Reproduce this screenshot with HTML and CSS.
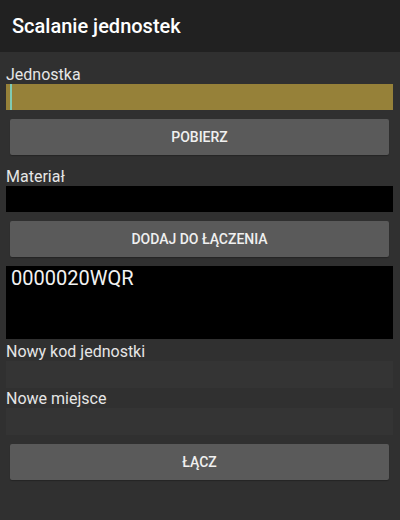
FILE: index.html
```html
<!DOCTYPE html>
<html>
<head>
    <meta charset="UTF-8">
    <link rel="stylesheet" href="styles.css">
</head>
<body>
    <div class="toolbar">Scalanie jednostek</div>
    <div class="content">
        <div class="field-label first">Jednostka</div>
        <div class="field-input focused"><span class="cursor"></span></div>
        <button class="action-btn">POBIERZ</button>

        <div class="field-label after-btn">Materiał</div>
        <div class="field-input black"></div>
        <button class="action-btn">DODAJ DO ŁĄCZENIA</button>

        <div class="unit-list">0000020WQR</div>

        <div class="field-label after-list">Nowy kod jednostki</div>
        <div class="field-input tall"></div>

        <div class="field-label after-input">Nowe miejsce</div>
        <div class="field-input tall"></div>

        <button class="action-btn">ŁĄCZ</button>
    </div>
</body>
</html>
```

FILE: styles.css
```css
html, body {
    margin: 0;
    padding: 0;
    height: 100%;
}
body {
    background: #303030;
    font-family: Roboto, "Noto Sans", sans-serif;
    color: #e6e6e6;
}
.toolbar {
    height: 52px;
    line-height: 52px;
    background: #212121;
    color: #fff;
    font-size: 20px;
    font-weight: 500;
    padding-left: 12px;
}
.content {
    display: flex;
    flex-direction: column;
    padding: 0 7px 0 6px;
}
.field-label {
    font-size: 16px;
    line-height: 19px;
    height: 19px;
    color: #e6e6e6;
}
.field-label.first {
    margin-top: 13px;
}
.field-label.after-btn {
    margin-top: 12px;
}
.field-label.after-list {
    margin-top: 3px;
}
.field-label.after-input {
    margin-top: 1px;
}
.field-input {
    height: 26px;
    background: #343434;
    position: relative;
}
.field-input.tall {
    height: 27px;
}
.field-input.focused {
    background: #968139;
}
.field-input.black {
    background: #000;
}
.cursor {
    position: absolute;
    left: 4px;
    top: 0;
    width: 2px;
    height: 26px;
    background: #80cbb4;
}
.action-btn {
    margin: 9px 4px 0;
    height: 36px;
    background: #5a5a5a;
    color: #f0f0f0;
    border: none;
    border-radius: 2px;
    font-family: Roboto, "Noto Sans", sans-serif;
    font-size: 14px;
    font-weight: 500;
    box-shadow: 0 1px 1px rgba(0,0,0,0.25);
}
.unit-list {
    margin-top: 9px;
    height: 73px;
    background: #000;
    color: #f2f2f2;
    font-size: 20px;
    line-height: 23px;
    padding: 1px 5px 0;
    box-sizing: border-box;
}
```
